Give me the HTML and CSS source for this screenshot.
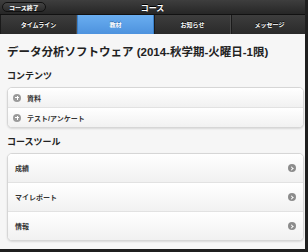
FILE: index.html
```html
<!DOCTYPE html>
<html lang="ja">
<head>
    <meta charset="UTF-8">
    <meta name="viewport" content="width=device-width, initial-scale=1.0">
    <title>コース</title>
    <link rel="stylesheet" href="styles.css">
</head>
<body>
    <div class="page">
        <div class="header">
            <a class="back-btn" href="#">コース終了</a>
            <h1 class="header-title">コース</h1>
        </div>
        <div class="tabs">
            <a class="tab" href="#">タイムライン</a>
            <a class="tab active" href="#">教材</a>
            <a class="tab" href="#">お知らせ</a>
            <a class="tab" href="#">メッセージ</a>
        </div>

        <div class="content">
            <h2 class="course-title">データ分析ソフトウェア (2014-秋学期-火曜日-1限)</h2>

            <h3 class="section-title">コンテンツ</h3>
            <ul class="box collapsible">
                <li class="row"><span class="plus-icon"></span>資料</li>
                <li class="row"><span class="plus-icon"></span>テスト/アンケート</li>
            </ul>

            <h3 class="section-title">コースツール</h3>
            <ul class="box tools">
                <li class="row">成績<span class="arrow-icon"></span></li>
                <li class="row">マイレポート<span class="arrow-icon"></span></li>
                <li class="row">情報<span class="arrow-icon"></span></li>
            </ul>
        </div>
    </div>
</body>
</html>
```

FILE: styles.css
```css
body {
    margin: 0;
    background-color: #1f1f1f;
    font-family: "Liberation Sans", "Noto Sans CJK JP", sans-serif;
    width: 308px;
    height: 252px;
    overflow: hidden;
}

.page {
    width: 305px;
    height: 249px;
    background-color: #f6f6f6;
    overflow: hidden;
}

.header {
    position: relative;
    height: 14px;
    background: linear-gradient(#3e3e3e, #262626);
    display: flex;
    align-items: center;
    justify-content: center;
}

.back-btn {
    position: absolute;
    left: 2px;
    top: 2px;
    height: 10px;
    line-height: 10px;
    padding: 0 6px;
    border-radius: 6px;
    border: 1px solid #111;
    box-sizing: border-box;
    background: linear-gradient(#444, #2b2b2b);
    color: #fff;
    font-size: 6px;
    font-weight: bold;
    text-decoration: none;
}

.header-title {
    margin: 0;
    color: #fff;
    font-size: 8px;
    font-weight: bold;
    text-shadow: 0 -1px 0 #000;
}

.tabs {
    display: flex;
    height: 19px;
    background-color: #222;
    border-top: 1px solid #111;
    width: 308px;
}

.tab {
    flex: 1;
    display: flex;
    align-items: center;
    justify-content: center;
    background: linear-gradient(#3d3d3d, #2a2a2a);
    border-left: 1px solid #1a1a1a;
    border-right: 1px solid #4a4a4a;
    color: #fff;
    font-size: 6px;
    font-weight: bold;
    text-decoration: none;
    text-shadow: 0 -1px 0 #000;
}

.tab.active {
    background: linear-gradient(#6aaef0, #4d92de);
    border-color: #3a7fc8;
    text-shadow: 0 -1px 0 #2b6bb0;
}

.content {
    padding: 9px 7px 0 7px;
}

.course-title {
    margin: 0 0 10px;
    font-size: 11.5px;
    font-weight: bold;
    color: #222;
    white-space: nowrap;
}

.section-title {
    margin: 0 0 5px;
    font-size: 9px;
    font-weight: bold;
    color: #222;
}

.box {
    list-style: none;
    margin: 0 0 7px;
    padding: 0;
    width: 295px;
    border: 1px solid #d6d6d6;
    border-radius: 5px;
    background: #fff;
    box-shadow: 0 1px 2px rgba(0, 0, 0, 0.12);
    overflow: hidden;
}

.row {
    display: flex;
    align-items: center;
    background: linear-gradient(#ffffff, #f1f1f1);
    border-top: 1px solid #e2e2e2;
    font-size: 7px;
    font-weight: bold;
    color: #333;
}

.row:first-child {
    border-top: none;
}

.collapsible .row {
    height: 19px;
    padding-left: 5px;
}

.tools .row {
    height: 28px;
    padding: 0 7px 0 7px;
    justify-content: space-between;
}

.plus-icon {
    position: relative;
    width: 8px;
    height: 8px;
    border-radius: 50%;
    background-color: #9a9a9a;
    margin-right: 6px;
}

.plus-icon::before,
.plus-icon::after {
    content: "";
    position: absolute;
    background-color: #fff;
}

.plus-icon::before {
    left: 2px;
    top: 3.5px;
    width: 4px;
    height: 1px;
}

.plus-icon::after {
    left: 3.5px;
    top: 2px;
    width: 1px;
    height: 4px;
}

.arrow-icon {
    position: relative;
    width: 8px;
    height: 8px;
    border-radius: 50%;
    background-color: #8c8c8c;
}

.arrow-icon::after {
    content: "";
    position: absolute;
    left: 2px;
    top: 2.5px;
    width: 2px;
    height: 2px;
    border-top: 1px solid #fff;
    border-right: 1px solid #fff;
    transform: rotate(45deg);
}
```
